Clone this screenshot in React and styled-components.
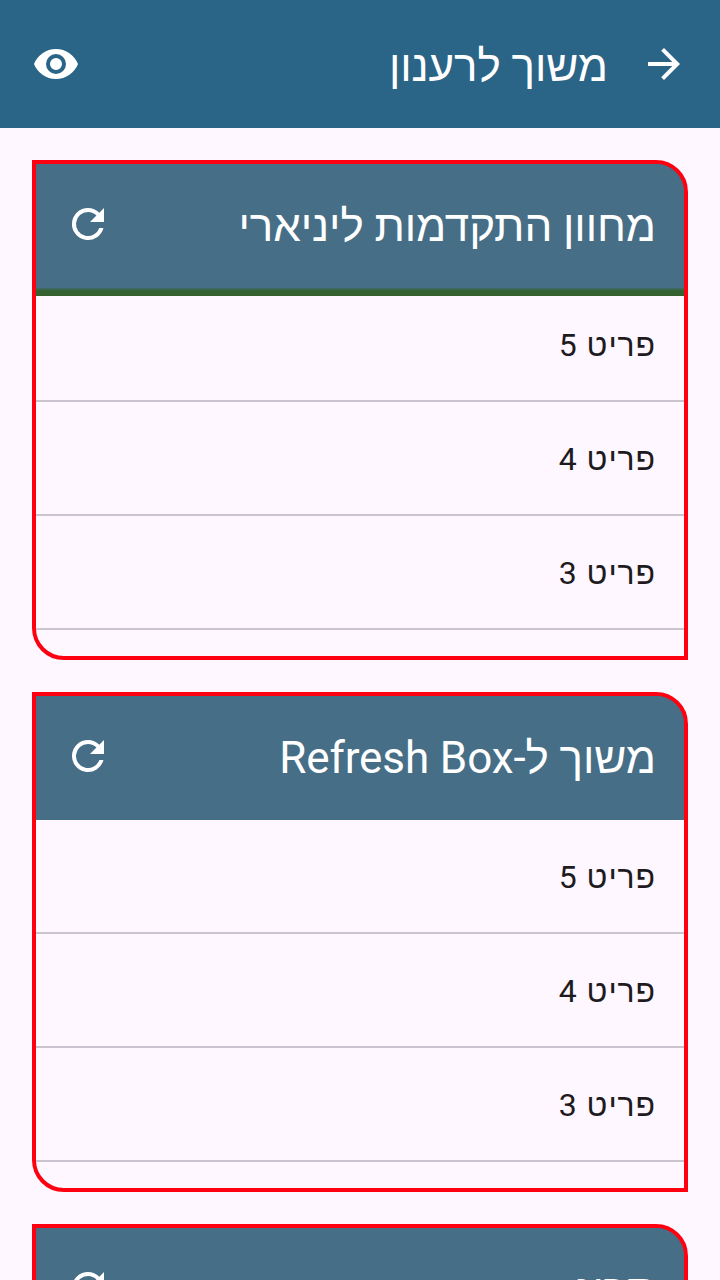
import React from "react";
import styled, { createGlobalStyle } from "styled-components";

const GlobalStyle = createGlobalStyle`
  * { box-sizing: border-box; }
  body {
    margin: 0;
    background: #fef7ff;
    font-family: Roboto, "Liberation Sans", sans-serif;
    overflow: hidden;
  }
`;

const Screen = styled.div`
  direction: rtl;
  height: 1280px;
  overflow: hidden;
  display: flex;
  flex-direction: column;
`;

const AppBar = styled.header`
  flex: none;
  height: 128px;
  padding: 0 32px;
  display: flex;
  align-items: center;
  background: #2a6588;
  color: #fff;
`;

const Title = styled.h1`
  margin: 0;
  padding-top: 4px;
  flex: 1;
  font-size: 44px;
  font-weight: 400;
  line-height: 56px;
  letter-spacing: -0.1px;
  white-space: nowrap;
  color: #fff;
`;

const Icon = styled.svg`
  flex: none;
  display: block;
  width: 48px;
  height: 48px;
  fill: #fff;
`;

const BackIcon = styled(Icon)`
  margin-inline-end: 32px;
`;

const Cards = styled.main`
  padding: 32px;
  display: flex;
  flex-direction: column;
  gap: 32px;
`;

const Card = styled.section`
  flex: none;
  height: 500px;
  border: 4px solid #ff0010;
  border-radius: 0 32px 0 32px;
  overflow: hidden;
  background: linear-gradient(#466e87 120px, #fef7ff 120px);
`;

const CardHeader = styled.header`
  height: 124px;
  padding: 0 28px 4px;
  display: flex;
  align-items: center;
  background: #466e87;
`;

const Progress = styled.div`
  height: 8px;
  margin-bottom: -8px;
  position: relative;
  background: linear-gradient(#416a6b, #32622f 3px, #35602f);
`;

const List = styled.ul`
  margin: 0;
  padding: 0;
  list-style: none;
`;

const Item = styled.li`
  height: 114px;
  padding: 1px 28px 0;
  border-bottom: 2px solid #cac4d0;
  font-size: 32px;
  line-height: 112px;
  letter-spacing: 0.9px;
  color: #1d1b20;
`;

const items = ["פריט 5", "פריט 4", "פריט 3"];

function RefreshCard({ title, loading }) {
  return (
    <Card>
      <CardHeader>
        <Title as="h2">{title}</Title>
        <Icon viewBox="0 0 24 24">
          <path d="M17.65 6.35A7.96 7.96 0 0 0 12 4a8 8 0 1 0 7.73 10h-2.08A6 6 0 1 1 12 6c1.66 0 3.14.69 4.22 1.78L13 11h7V4z" />
        </Icon>
      </CardHeader>
      {loading && <Progress />}
      <List>
        {items.map((item) => (
          <Item key={item}>{item}</Item>
        ))}
      </List>
    </Card>
  );
}

export default function App() {
  return (
    <Screen>
      <GlobalStyle />
      <AppBar>
        <BackIcon viewBox="0 0 24 24">
          <path d="M12 4l-1.41 1.41L16.17 11H4v2h12.17l-5.58 5.59L12 20l8-8z" />
        </BackIcon>
        <Title>משוך לרענון</Title>
        <Icon viewBox="0 0 24 24">
          <path d="M12 4.5C7 4.5 2.73 7.61 1 12c1.73 4.39 6 7.5 11 7.5s9.27-3.11 11-7.5c-1.73-4.39-6-7.5-11-7.5zM12 17a5 5 0 1 1 0-10 5 5 0 0 1 0 10zm0-8a3 3 0 1 0 0 6 3 3 0 0 0 0-6z" />
        </Icon>
      </AppBar>
      <Cards>
        <RefreshCard title="מחוון התקדמות ליניארי" loading />
        <RefreshCard title="משוך ל-Refresh Box" />
        <RefreshCard title="סריג" />
      </Cards>
    </Screen>
  );
}
